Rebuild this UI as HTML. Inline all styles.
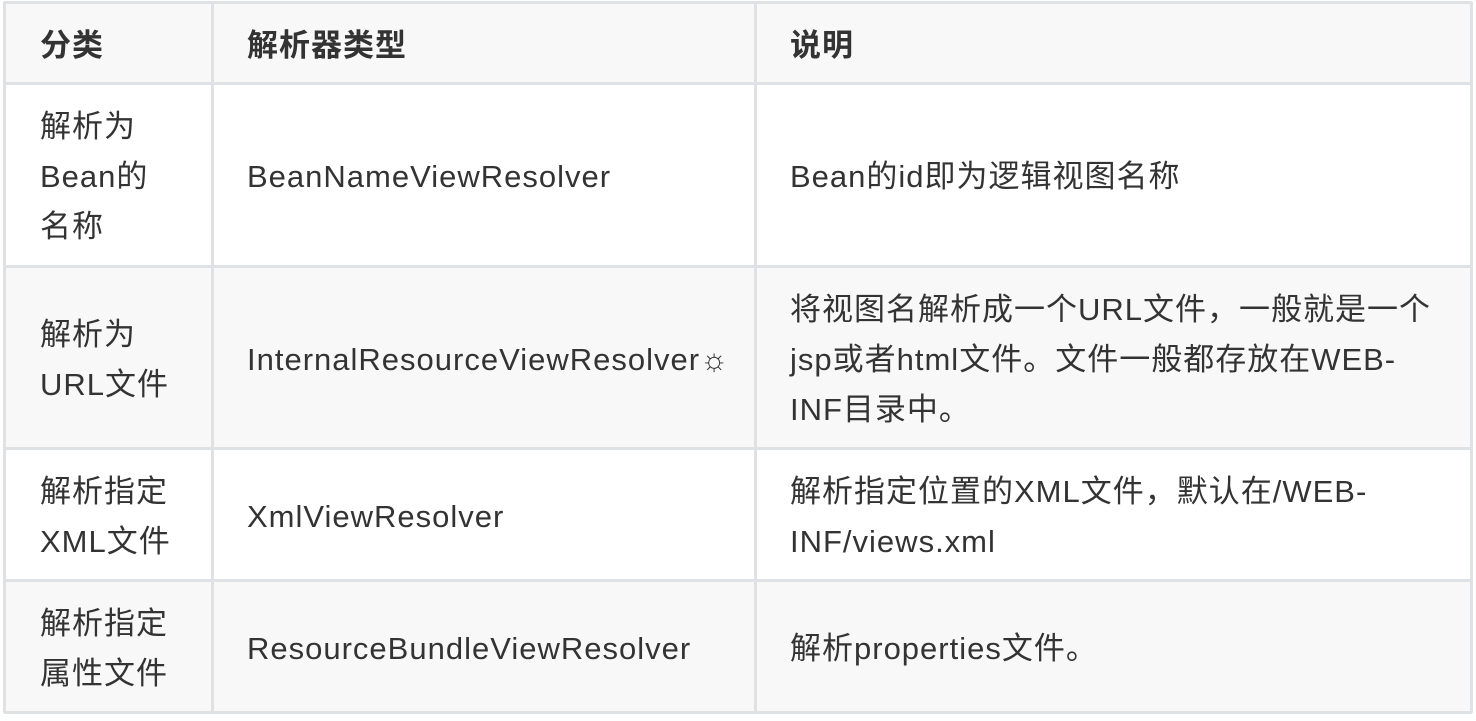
<!DOCTYPE html>
<html><head><meta charset="utf-8"><style>
html,body{margin:0;padding:0;background:#fff;width:1476px;height:721px;overflow:hidden}
body{font-family:"Liberation Sans","Noto Sans CJK SC",sans-serif;color:#333;font-size:31px}
.c{position:absolute;display:flex;align-items:center;line-height:50px;box-sizing:border-box;letter-spacing:1px;padding-top:4px}
.g{background:#f8f8f8}
.h{font-weight:bold}
.vl{position:absolute;top:2px;width:3px;height:711px;background:#dfe2e5}
.hl{position:absolute;left:4px;width:1468px;height:3px;background:#dfe2e5}
</style></head><body>
<div style="position:absolute;left:4px;top:2px;width:1468px;height:81px" class="g"></div>
<div style="position:absolute;left:4px;top:266px;width:1468px;height:182px" class="g"></div>
<div style="position:absolute;left:4px;top:580px;width:1468px;height:132px" class="g"></div>

<div class="hl" style="top:1px"></div>
<div class="hl" style="top:82px"></div>
<div class="hl" style="top:265px"></div>
<div class="hl" style="top:447px"></div>
<div class="hl" style="top:579px"></div>
<div class="hl" style="top:711px"></div>
<div class="vl" style="left:3px"></div>
<div class="vl" style="left:211px"></div>
<div class="vl" style="left:754px"></div>
<div class="vl" style="left:1470px"></div>

<div class="c h" style="left:40px;top:4px;height:79px">分类</div>
<div class="c h" style="left:247px;top:4px;height:79px">解析器类型</div>
<div class="c h" style="left:790px;top:4px;height:79px">说明</div>

<div class="c" style="left:40px;top:84px;height:182px;width:170px">解析为<br>Bean的<br>名称</div>
<div class="c" style="left:247px;top:84px;height:182px">BeanNameViewResolver</div>
<div class="c" style="left:790px;top:84px;height:182px">Bean的id即为逻辑视图名称</div>

<div class="c" style="left:40px;top:267px;height:181px;width:170px">解析为<br>URL文件</div>
<div class="c" style="left:247px;top:267px;height:181px">InternalResourceViewResolver☼</div>
<div class="c" style="left:790px;top:267px;height:181px;width:675px">将视图名解析成一个URL文件，一般就是一个<br>jsp或者html文件。文件一般都存放在WEB-<br>INF目录中。</div>

<div class="c" style="left:40px;top:449px;height:131px;width:170px">解析指定<br>XML文件</div>
<div class="c" style="left:247px;top:449px;height:131px">XmlViewResolver</div>
<div class="c" style="left:790px;top:449px;height:131px;width:675px">解析指定位置的XML文件，默认在/WEB-<br>INF/views.xml</div>

<div class="c" style="left:40px;top:581px;height:131px;width:170px">解析指定<br>属性文件</div>
<div class="c" style="left:247px;top:581px;height:131px">ResourceBundleViewResolver</div>
<div class="c" style="left:790px;top:581px;height:131px">解析properties文件。</div>
</body></html>
